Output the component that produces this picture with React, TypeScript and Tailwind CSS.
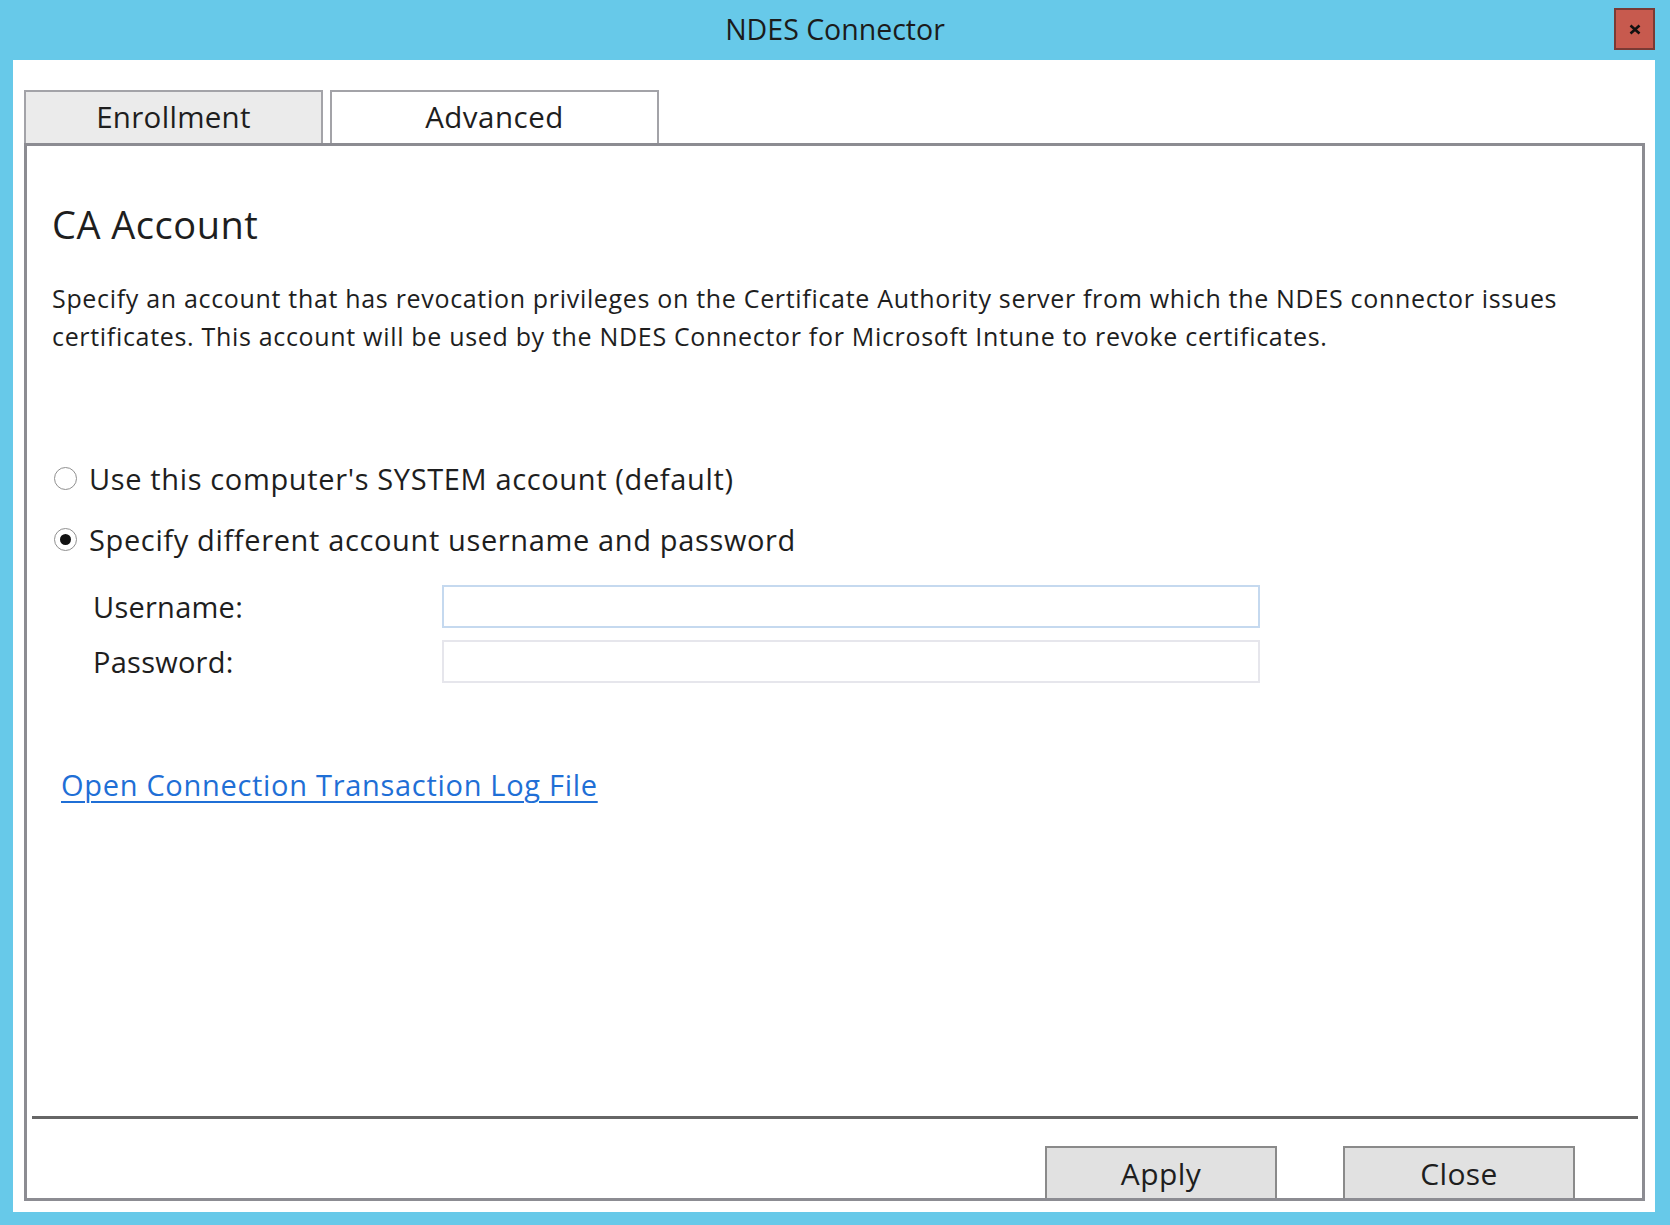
import React from "react";

const font = { fontFamily: '"Open Sans", "Noto Sans", sans-serif' };

const Radio: React.FC<{ checked?: boolean; label: string }> = ({ checked, label }) => (
  <div className="flex items-center h-[40px]">
    <span className="w-[23px] h-[23px] rounded-full border-[1.5px] border-[#8f8f8f] bg-white flex items-center justify-center shrink-0">
      {checked && <span className="w-[11px] h-[11px] rounded-full bg-[#111]" />}
    </span>
    <span className="ml-[12px] text-[29px] tracking-[0.64px] text-[#1e1e1e] leading-none">{label}</span>
  </div>
);

const Field: React.FC<{ label: string; focused?: boolean }> = ({ label, focused }) => (
  <div className="flex items-center h-[43px]">
    <span className="w-[349px] text-[29px] tracking-[0.25px] text-[#1e1e1e] leading-none">{label}</span>
    <input
      type="text"
      className={
        "w-[818px] h-[43px] bg-white border-2 outline-none " +
        (focused ? "border-[#c5d9ef]" : "border-[#e6e6ec]")
      }
    />
  </div>
);

export default function App() {
  return (
    <div className="w-[1670px] h-[1225px] bg-[#67c9e9] flex flex-col" style={font}>
      {/* title bar */}
      <div className="h-[60px] grid grid-cols-[1fr_auto_1fr] items-start">
        <div />
        <div className="pt-[10px] text-[28.5px] text-[#1b1b1b] leading-[38px]">NDES Connector</div>
        <div className="flex justify-end pr-[15px] pt-[8px]">
          <div className="w-[41px] h-[42px] bg-[#c75a4e] border-2 border-[#7a3a34] flex items-center justify-center">
            <svg width="12" height="11" viewBox="0 0 12 11">
              <path d="M1.5 1.5 L10.5 9.5 M10.5 1.5 L1.5 9.5" stroke="#111" strokeWidth="2.6" />
            </svg>
          </div>
        </div>
      </div>

      {/* window body */}
      <div className="flex-1 ml-[13px] mr-[15px] mb-[13px] bg-white flex flex-col pl-[11px] pr-[10px] pt-[30px] pb-[11px]">
        {/* tabs */}
        <div className="flex gap-[7px] h-[53px] items-end">
          <div className="w-[299px] h-[53px] bg-[#ebebeb] border-2 border-b-0 border-[#a3a3a8] flex items-center justify-center text-[29.5px] tracking-[0.3px] text-[#1e1e1e]">
            Enrollment
          </div>
          <div className="w-[329px] h-[53px] bg-white border-2 border-b-0 border-[#a3a3a8] flex items-center justify-center text-[29.5px] tracking-[0.5px] text-[#1e1e1e]">
            Advanced
          </div>
        </div>

        {/* panel */}
        <div className="flex-1 border-[3px] border-[#8c8c92] flex flex-col">
          <div className="flex-1 flex flex-col pl-[25px]">
            <div className="mt-[56px] text-[38px] tracking-[0.5px] leading-[44px] text-[#1e1e1e]">CA Account</div>
            <p className="mt-[33px] text-[25px] tracking-[0.68px] leading-[38px] text-[#1e1e1e] whitespace-nowrap">
              Specify an account that has revocation privileges on the Certificate Authority server from which the NDES connector issues
              <br />
              certificates. This account will be used by the NDES Connector for Microsoft Intune to revoke certificates.
            </p>
            <div className="mt-[103px] flex flex-col gap-[21px] pl-[2px]">
              <Radio label="Use this computer's SYSTEM account (default)" />
              <Radio checked label="Specify different account username and password" />
            </div>
            <div className="mt-[26px] flex flex-col gap-[12px] pl-[41px]">
              <Field label="Username:" focused />
              <Field label="Password:" />
            </div>
            <div className="mt-[84px] pl-[9px]">
              <a href="#" className="text-[29px] tracking-[0.7px] leading-[36px] text-[#1f6fd6] underline underline-offset-[5px] decoration-[2px]">
                Open Connection Transaction Log File
              </a>
            </div>
          </div>
          <div className="h-[3px] bg-[#666666] ml-[5px] mr-[4px]" />
          <div className="h-[79px] pt-[27px] flex justify-end gap-[66px] pr-[67px]">
            <div className="w-[232px] h-full bg-[#e1e1e1] border-2 border-b-0 border-[#8a8a8a] flex items-start justify-center pt-[6px] text-[30px] tracking-[0.4px] text-[#1e1e1e] leading-[40px]">
              Apply
            </div>
            <div className="w-[232px] h-full bg-[#e1e1e1] border-2 border-b-0 border-[#8a8a8a] flex items-start justify-center pt-[6px] text-[30px] tracking-[0.4px] text-[#1e1e1e] leading-[40px]">
              Close
            </div>
          </div>
        </div>
      </div>
    </div>
  );
}
